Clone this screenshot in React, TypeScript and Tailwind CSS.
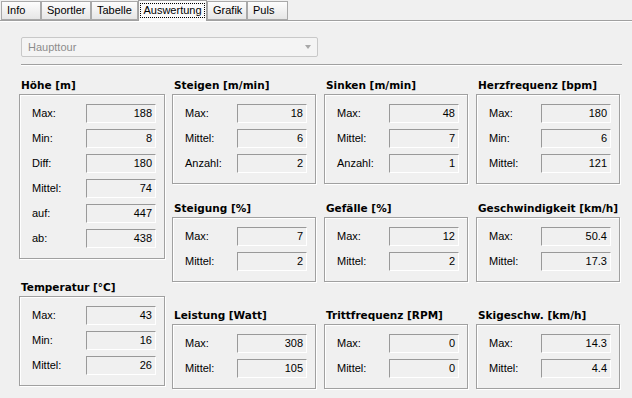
import React from "react";

type Row = [string, string];

const tabs = [
  { label: "Info", w: "w-[40px]" },
  { label: "Sportler", w: "w-[50px]" },
  { label: "Tabelle", w: "w-[47px]" },
  { label: "Auswertung", w: "w-[69px]", active: true },
  { label: "Grafik", w: "w-[40px]" },
  { label: "Puls", w: "w-[41px]" },
];

const grid: { title: string; rows: Row[]; mt: string }[] = [
  { title: "Steigen [m/min]", rows: [["Max:", "18"], ["Mittel:", "6"], ["Anzahl:", "2"]], mt: "" },
  { title: "Sinken [m/min]", rows: [["Max:", "48"], ["Mittel:", "7"], ["Anzahl:", "1"]], mt: "" },
  { title: "Herzfrequenz [bpm]", rows: [["Max:", "180"], ["Min:", "6"], ["Mittel:", "121"]], mt: "" },
  { title: "Steigung [%]", rows: [["Max:", "7"], ["Mittel:", "2"]], mt: "mt-[18px]" },
  { title: "Gefälle [%]", rows: [["Max:", "12"], ["Mittel:", "2"]], mt: "mt-[18px]" },
  { title: "Geschwindigkeit [km/h]", rows: [["Max:", "50.4"], ["Mittel:", "17.3"]], mt: "mt-[18px]" },
  { title: "Leistung [Watt]", rows: [["Max:", "308"], ["Mittel:", "105"]], mt: "mt-[27px]" },
  { title: "Trittfrequenz [RPM]", rows: [["Max:", "0"], ["Mittel:", "0"]], mt: "mt-[27px]" },
  { title: "Skigeschw. [km/h]", rows: [["Max:", "14.3"], ["Mittel:", "4.4"]], mt: "mt-[27px]" },
];

function Field({ label, value }: { label: string; value: string }) {
  return (
    <div className="flex h-[19px] items-center justify-between pl-[12px] pr-[8px]">
      <span>{label}</span>
      <div className="flex h-[19px] w-[70px] items-center justify-end border border-t-[#999] border-l-[#999] border-r-white border-b-white pr-[3px]">
        {value}
      </div>
    </div>
  );
}

function Group({ title, rows, className = "" }: { title: string; rows: Row[]; className?: string }) {
  return (
    <div className={className}>
      <div className="h-[13px] pl-[2px] font-['DejaVu_Sans',sans-serif] text-[10.5px] font-bold leading-[13px] text-black">
        {title}
      </div>
      <div className="mt-[2px] flex flex-col gap-[6px] border border-[#a0a0a0] pt-[9px] pb-[10px] shadow-[inset_1px_1px_0_#fff,1px_1px_0_#fff]">
        {rows.map(([l, v]) => (
          <Field key={l} label={l} value={v} />
        ))}
      </div>
    </div>
  );
}

export default function App() {
  return (
    <div className="h-[398px] w-[632px] overflow-hidden bg-[#f0f0f0] font-['Liberation_Sans',Arial,sans-serif] text-[11px] text-black">
      {/* tab strip */}
      <div className="relative flex h-[21px] items-end pl-[1px]">
        <div className="absolute bottom-0 left-0 right-0 h-px bg-[#a0a0a0]" />
        {tabs.map((t) =>
          t.active ? (
            <div
              key={t.label}
              className={`relative z-10 flex h-[21px] ${t.w} items-start justify-center border border-b-0 border-[#a0a0a0] bg-[#fafafa] pt-[2px]`}
            >
              <span className="border border-dotted border-black px-[2px] leading-[13px]">{t.label}</span>
            </div>
          ) : (
            <div
              key={t.label}
              className={`mb-px flex h-[19px] ${t.w} items-center border border-[#a9a9a9] bg-gradient-to-b from-[#fdfdfd] to-[#e6e6e6] pl-[5px]`}
            >
              {t.label}
            </div>
          )
        )}
      </div>

      {/* tab page */}
      <div className="h-[377px] border-t border-white pt-[15px]">
        <div className="ml-[21px] flex h-[20px] w-[297px] items-center justify-between rounded-[2px] border border-[#c8c8c8] bg-[#f4f4f4] pl-[6px] pr-[6px] text-[#8c8c8c]">
          <span>Haupttour</span>
          <span className="h-0 w-0 border-l-[3.5px] border-r-[3.5px] border-t-[4px] border-l-transparent border-r-transparent border-t-[#a8a8a8]" />
        </div>

        <div className="ml-[21px] mt-[7px] h-px w-[601px] bg-[#a0a0a0] shadow-[0_1px_0_#fff]" />

        <div className="mt-[14px] flex pl-[19px]">
          <div className="flex w-[146px] flex-col">
            <Group
              title="Höhe [m]"
              rows={[
                ["Max:", "188"],
                ["Min:", "8"],
                ["Diff:", "180"],
                ["Mittel:", "74"],
                ["auf:", "447"],
                ["ab:", "438"],
              ]}
            />
            <Group
              title="Temperatur [°C]"
              className="mt-[22px]"
              rows={[
                ["Max:", "43"],
                ["Min:", "16"],
                ["Mittel:", "26"],
              ]}
            />
          </div>

          <div className="ml-[7px] grid grid-cols-[144px_144px_144px] content-start gap-x-[8px]">
            {grid.map((g) => (
              <Group key={g.title} title={g.title} rows={g.rows} className={g.mt} />
            ))}
          </div>
        </div>
      </div>
    </div>
  );
}
